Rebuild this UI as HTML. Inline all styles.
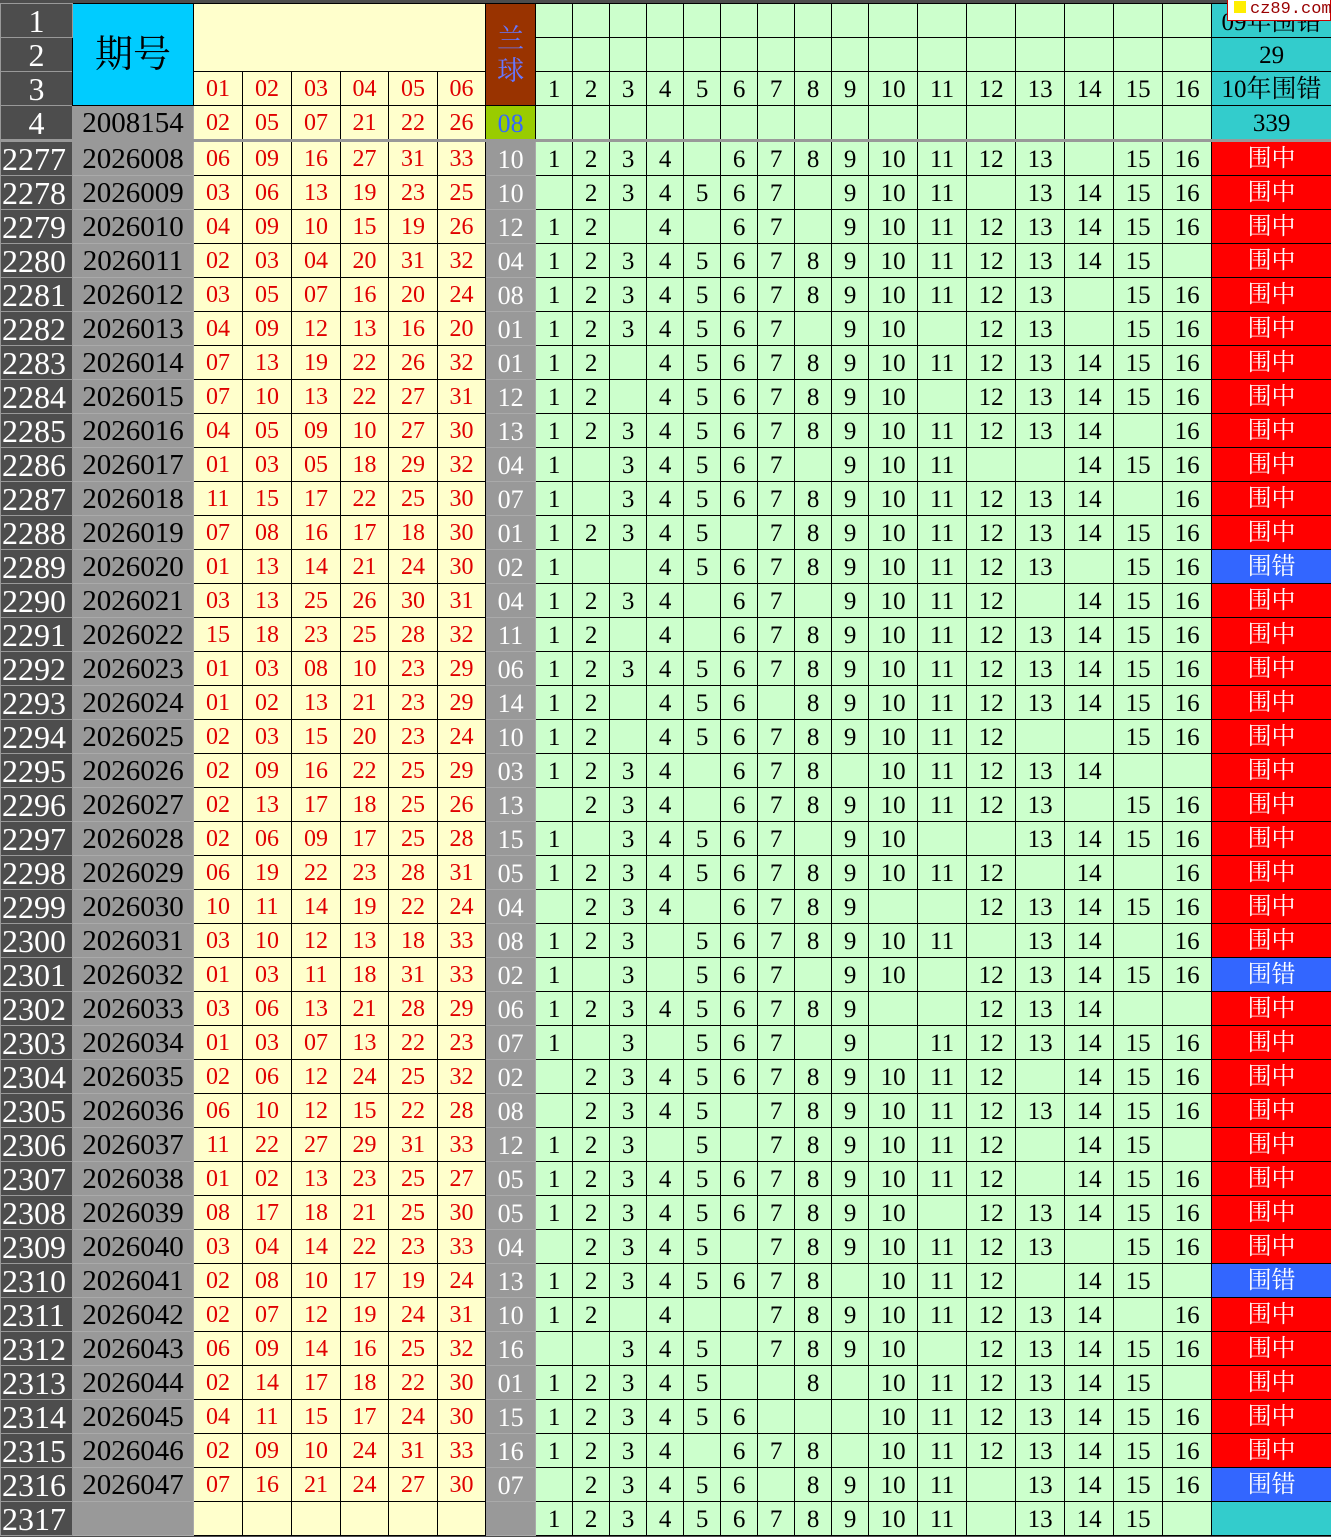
<!DOCTYPE html>
<html><head><meta charset="utf-8">
<style>
html,body{margin:0;padding:0;background:#4d4d4d;}
body{width:1331px;height:1537px;overflow:hidden;position:relative;}
table{position:absolute;left:0;top:3px;border-collapse:collapse;table-layout:fixed;width:1331px;font-family:"Liberation Serif","Noto Serif CJK SC",serif;}
td{border:1px solid #000;height:33px;padding:0;text-align:center;vertical-align:bottom;line-height:31px;font-size:25px;background:#ccffcc;color:#000;overflow:hidden;white-space:nowrap;}
td.rn{background:#4d4d4d;color:#fff;font-size:32px;border-color:#999;text-align:center;line-height:32px;}
td.pd{background:#999;border-color:#aaa;font-size:29px;}
td.rd{background:#ffffcc;color:#e00000;font-size:24px;}
td.z{background:#ff0000;color:#fff;font-size:24px;}
td.c{background:#3366ff;color:#fff;font-size:24px;}
td.cy{background:#33cccc;font-size:25px;}
tbody.d td:nth-child(1){background:#4d4d4d;color:#fff;font-size:32px;border-color:#999;text-align:left;padding-left:1px;line-height:32px;}
tbody.d td:nth-child(2){background:#999;border-color:#aaa;font-size:29px;}
tbody.d td:nth-child(n+3):nth-child(-n+8){background:#ffffcc;color:#e00000;font-size:24px;}
tbody.d td:nth-child(9){background:#999;color:#fff;font-size:26px;border-color:#aaa;}
tbody.d tr:first-child td{border-top:3px solid #999;}
.wm{position:absolute;left:1227px;top:0;width:102px;height:20px;background:#fff;border:1px solid #c00;border-top:0;font-family:"Liberation Mono",monospace;font-size:17px;color:#900;line-height:20px;white-space:nowrap;}
.wm i{display:inline-block;width:12px;height:12px;background:#ffee00;margin:0 4px 0 6px;}
</style></head><body>
<table>
<colgroup><col style="width:72px"><col style="width:121px"><col style="width:49px"><col style="width:49px"><col style="width:49px"><col style="width:48px"><col style="width:49px"><col style="width:48px"><col style="width:50px"><col style="width:37px"><col style="width:37px"><col style="width:37px"><col style="width:37px"><col style="width:37px"><col style="width:37px"><col style="width:37px"><col style="width:37px"><col style="width:37px"><col style="width:49px"><col style="width:49px"><col style="width:49px"><col style="width:49px"><col style="width:49px"><col style="width:49px"><col style="width:49px"><col style="width:120px"></colgroup>
<tbody>
<tr><td class="rn">1</td><td rowspan="3" style="background:#00ccff;font-size:38px;vertical-align:middle;line-height:40px">期号</td><td rowspan="2" colspan="6" class="rd"></td><td rowspan="3" style="background:#993300;color:#6677ff;font-size:27px;line-height:32px;vertical-align:middle">兰<br>球</td><td></td><td></td><td></td><td></td><td></td><td></td><td></td><td></td><td></td><td></td><td></td><td></td><td></td><td></td><td></td><td></td><td class="cy" style="line-height:28px">09年围错</td></tr>
<tr><td class="rn">2</td><td></td><td></td><td></td><td></td><td></td><td></td><td></td><td></td><td></td><td></td><td></td><td></td><td></td><td></td><td></td><td></td><td class="cy">29</td></tr>
<tr><td class="rn">3</td><td class="rd">01</td><td class="rd">02</td><td class="rd">03</td><td class="rd">04</td><td class="rd">05</td><td class="rd">06</td><td>1</td><td>2</td><td>3</td><td>4</td><td>5</td><td>6</td><td>7</td><td>8</td><td>9</td><td>10</td><td>11</td><td>12</td><td>13</td><td>14</td><td>15</td><td>16</td><td class="cy">10年围错</td></tr>
<tr><td class="rn">4</td><td class="pd">2008154</td><td class="rd">02</td><td class="rd">05</td><td class="rd">07</td><td class="rd">21</td><td class="rd">22</td><td class="rd">26</td><td style="background:#99cc00;color:#3366ff;font-size:26px">08</td><td></td><td></td><td></td><td></td><td></td><td></td><td></td><td></td><td></td><td></td><td></td><td></td><td></td><td></td><td></td><td></td><td class="cy">339</td></tr>
</tbody>
<tbody class="d">
<tr><td>2277</td><td>2026008</td><td>06</td><td>09</td><td>16</td><td>27</td><td>31</td><td>33</td><td>10</td><td>1</td><td>2</td><td>3</td><td>4</td><td></td><td>6</td><td>7</td><td>8</td><td>9</td><td>10</td><td>11</td><td>12</td><td>13</td><td></td><td>15</td><td>16</td><td class="z">围中</td></tr>
<tr><td>2278</td><td>2026009</td><td>03</td><td>06</td><td>13</td><td>19</td><td>23</td><td>25</td><td>10</td><td></td><td>2</td><td>3</td><td>4</td><td>5</td><td>6</td><td>7</td><td></td><td>9</td><td>10</td><td>11</td><td></td><td>13</td><td>14</td><td>15</td><td>16</td><td class="z">围中</td></tr>
<tr><td>2279</td><td>2026010</td><td>04</td><td>09</td><td>10</td><td>15</td><td>19</td><td>26</td><td>12</td><td>1</td><td>2</td><td></td><td>4</td><td></td><td>6</td><td>7</td><td></td><td>9</td><td>10</td><td>11</td><td>12</td><td>13</td><td>14</td><td>15</td><td>16</td><td class="z">围中</td></tr>
<tr><td>2280</td><td>2026011</td><td>02</td><td>03</td><td>04</td><td>20</td><td>31</td><td>32</td><td>04</td><td>1</td><td>2</td><td>3</td><td>4</td><td>5</td><td>6</td><td>7</td><td>8</td><td>9</td><td>10</td><td>11</td><td>12</td><td>13</td><td>14</td><td>15</td><td></td><td class="z">围中</td></tr>
<tr><td>2281</td><td>2026012</td><td>03</td><td>05</td><td>07</td><td>16</td><td>20</td><td>24</td><td>08</td><td>1</td><td>2</td><td>3</td><td>4</td><td>5</td><td>6</td><td>7</td><td>8</td><td>9</td><td>10</td><td>11</td><td>12</td><td>13</td><td></td><td>15</td><td>16</td><td class="z">围中</td></tr>
<tr><td>2282</td><td>2026013</td><td>04</td><td>09</td><td>12</td><td>13</td><td>16</td><td>20</td><td>01</td><td>1</td><td>2</td><td>3</td><td>4</td><td>5</td><td>6</td><td>7</td><td></td><td>9</td><td>10</td><td></td><td>12</td><td>13</td><td></td><td>15</td><td>16</td><td class="z">围中</td></tr>
<tr><td>2283</td><td>2026014</td><td>07</td><td>13</td><td>19</td><td>22</td><td>26</td><td>32</td><td>01</td><td>1</td><td>2</td><td></td><td>4</td><td>5</td><td>6</td><td>7</td><td>8</td><td>9</td><td>10</td><td>11</td><td>12</td><td>13</td><td>14</td><td>15</td><td>16</td><td class="z">围中</td></tr>
<tr><td>2284</td><td>2026015</td><td>07</td><td>10</td><td>13</td><td>22</td><td>27</td><td>31</td><td>12</td><td>1</td><td>2</td><td></td><td>4</td><td>5</td><td>6</td><td>7</td><td>8</td><td>9</td><td>10</td><td></td><td>12</td><td>13</td><td>14</td><td>15</td><td>16</td><td class="z">围中</td></tr>
<tr><td>2285</td><td>2026016</td><td>04</td><td>05</td><td>09</td><td>10</td><td>27</td><td>30</td><td>13</td><td>1</td><td>2</td><td>3</td><td>4</td><td>5</td><td>6</td><td>7</td><td>8</td><td>9</td><td>10</td><td>11</td><td>12</td><td>13</td><td>14</td><td></td><td>16</td><td class="z">围中</td></tr>
<tr><td>2286</td><td>2026017</td><td>01</td><td>03</td><td>05</td><td>18</td><td>29</td><td>32</td><td>04</td><td>1</td><td></td><td>3</td><td>4</td><td>5</td><td>6</td><td>7</td><td></td><td>9</td><td>10</td><td>11</td><td></td><td></td><td>14</td><td>15</td><td>16</td><td class="z">围中</td></tr>
<tr><td>2287</td><td>2026018</td><td>11</td><td>15</td><td>17</td><td>22</td><td>25</td><td>30</td><td>07</td><td>1</td><td></td><td>3</td><td>4</td><td>5</td><td>6</td><td>7</td><td>8</td><td>9</td><td>10</td><td>11</td><td>12</td><td>13</td><td>14</td><td></td><td>16</td><td class="z">围中</td></tr>
<tr><td>2288</td><td>2026019</td><td>07</td><td>08</td><td>16</td><td>17</td><td>18</td><td>30</td><td>01</td><td>1</td><td>2</td><td>3</td><td>4</td><td>5</td><td></td><td>7</td><td>8</td><td>9</td><td>10</td><td>11</td><td>12</td><td>13</td><td>14</td><td>15</td><td>16</td><td class="z">围中</td></tr>
<tr><td>2289</td><td>2026020</td><td>01</td><td>13</td><td>14</td><td>21</td><td>24</td><td>30</td><td>02</td><td>1</td><td></td><td></td><td>4</td><td>5</td><td>6</td><td>7</td><td>8</td><td>9</td><td>10</td><td>11</td><td>12</td><td>13</td><td></td><td>15</td><td>16</td><td class="c">围错</td></tr>
<tr><td>2290</td><td>2026021</td><td>03</td><td>13</td><td>25</td><td>26</td><td>30</td><td>31</td><td>04</td><td>1</td><td>2</td><td>3</td><td>4</td><td></td><td>6</td><td>7</td><td></td><td>9</td><td>10</td><td>11</td><td>12</td><td></td><td>14</td><td>15</td><td>16</td><td class="z">围中</td></tr>
<tr><td>2291</td><td>2026022</td><td>15</td><td>18</td><td>23</td><td>25</td><td>28</td><td>32</td><td>11</td><td>1</td><td>2</td><td></td><td>4</td><td></td><td>6</td><td>7</td><td>8</td><td>9</td><td>10</td><td>11</td><td>12</td><td>13</td><td>14</td><td>15</td><td>16</td><td class="z">围中</td></tr>
<tr><td>2292</td><td>2026023</td><td>01</td><td>03</td><td>08</td><td>10</td><td>23</td><td>29</td><td>06</td><td>1</td><td>2</td><td>3</td><td>4</td><td>5</td><td>6</td><td>7</td><td>8</td><td>9</td><td>10</td><td>11</td><td>12</td><td>13</td><td>14</td><td>15</td><td>16</td><td class="z">围中</td></tr>
<tr><td>2293</td><td>2026024</td><td>01</td><td>02</td><td>13</td><td>21</td><td>23</td><td>29</td><td>14</td><td>1</td><td>2</td><td></td><td>4</td><td>5</td><td>6</td><td></td><td>8</td><td>9</td><td>10</td><td>11</td><td>12</td><td>13</td><td>14</td><td>15</td><td>16</td><td class="z">围中</td></tr>
<tr><td>2294</td><td>2026025</td><td>02</td><td>03</td><td>15</td><td>20</td><td>23</td><td>24</td><td>10</td><td>1</td><td>2</td><td></td><td>4</td><td>5</td><td>6</td><td>7</td><td>8</td><td>9</td><td>10</td><td>11</td><td>12</td><td></td><td></td><td>15</td><td>16</td><td class="z">围中</td></tr>
<tr><td>2295</td><td>2026026</td><td>02</td><td>09</td><td>16</td><td>22</td><td>25</td><td>29</td><td>03</td><td>1</td><td>2</td><td>3</td><td>4</td><td></td><td>6</td><td>7</td><td>8</td><td></td><td>10</td><td>11</td><td>12</td><td>13</td><td>14</td><td></td><td></td><td class="z">围中</td></tr>
<tr><td>2296</td><td>2026027</td><td>02</td><td>13</td><td>17</td><td>18</td><td>25</td><td>26</td><td>13</td><td></td><td>2</td><td>3</td><td>4</td><td></td><td>6</td><td>7</td><td>8</td><td>9</td><td>10</td><td>11</td><td>12</td><td>13</td><td></td><td>15</td><td>16</td><td class="z">围中</td></tr>
<tr><td>2297</td><td>2026028</td><td>02</td><td>06</td><td>09</td><td>17</td><td>25</td><td>28</td><td>15</td><td>1</td><td></td><td>3</td><td>4</td><td>5</td><td>6</td><td>7</td><td></td><td>9</td><td>10</td><td></td><td></td><td>13</td><td>14</td><td>15</td><td>16</td><td class="z">围中</td></tr>
<tr><td>2298</td><td>2026029</td><td>06</td><td>19</td><td>22</td><td>23</td><td>28</td><td>31</td><td>05</td><td>1</td><td>2</td><td>3</td><td>4</td><td>5</td><td>6</td><td>7</td><td>8</td><td>9</td><td>10</td><td>11</td><td>12</td><td></td><td>14</td><td></td><td>16</td><td class="z">围中</td></tr>
<tr><td>2299</td><td>2026030</td><td>10</td><td>11</td><td>14</td><td>19</td><td>22</td><td>24</td><td>04</td><td></td><td>2</td><td>3</td><td>4</td><td></td><td>6</td><td>7</td><td>8</td><td>9</td><td></td><td></td><td>12</td><td>13</td><td>14</td><td>15</td><td>16</td><td class="z">围中</td></tr>
<tr><td>2300</td><td>2026031</td><td>03</td><td>10</td><td>12</td><td>13</td><td>18</td><td>33</td><td>08</td><td>1</td><td>2</td><td>3</td><td></td><td>5</td><td>6</td><td>7</td><td>8</td><td>9</td><td>10</td><td>11</td><td></td><td>13</td><td>14</td><td></td><td>16</td><td class="z">围中</td></tr>
<tr><td>2301</td><td>2026032</td><td>01</td><td>03</td><td>11</td><td>18</td><td>31</td><td>33</td><td>02</td><td>1</td><td></td><td>3</td><td></td><td>5</td><td>6</td><td>7</td><td></td><td>9</td><td>10</td><td></td><td>12</td><td>13</td><td>14</td><td>15</td><td>16</td><td class="c">围错</td></tr>
<tr><td>2302</td><td>2026033</td><td>03</td><td>06</td><td>13</td><td>21</td><td>28</td><td>29</td><td>06</td><td>1</td><td>2</td><td>3</td><td>4</td><td>5</td><td>6</td><td>7</td><td>8</td><td>9</td><td></td><td></td><td>12</td><td>13</td><td>14</td><td></td><td></td><td class="z">围中</td></tr>
<tr><td>2303</td><td>2026034</td><td>01</td><td>03</td><td>07</td><td>13</td><td>22</td><td>23</td><td>07</td><td>1</td><td></td><td>3</td><td></td><td>5</td><td>6</td><td>7</td><td></td><td>9</td><td></td><td>11</td><td>12</td><td>13</td><td>14</td><td>15</td><td>16</td><td class="z">围中</td></tr>
<tr><td>2304</td><td>2026035</td><td>02</td><td>06</td><td>12</td><td>24</td><td>25</td><td>32</td><td>02</td><td></td><td>2</td><td>3</td><td>4</td><td>5</td><td>6</td><td>7</td><td>8</td><td>9</td><td>10</td><td>11</td><td>12</td><td></td><td>14</td><td>15</td><td>16</td><td class="z">围中</td></tr>
<tr><td>2305</td><td>2026036</td><td>06</td><td>10</td><td>12</td><td>15</td><td>22</td><td>28</td><td>08</td><td></td><td>2</td><td>3</td><td>4</td><td>5</td><td></td><td>7</td><td>8</td><td>9</td><td>10</td><td>11</td><td>12</td><td>13</td><td>14</td><td>15</td><td>16</td><td class="z">围中</td></tr>
<tr><td>2306</td><td>2026037</td><td>11</td><td>22</td><td>27</td><td>29</td><td>31</td><td>33</td><td>12</td><td>1</td><td>2</td><td>3</td><td></td><td>5</td><td></td><td>7</td><td>8</td><td>9</td><td>10</td><td>11</td><td>12</td><td></td><td>14</td><td>15</td><td></td><td class="z">围中</td></tr>
<tr><td>2307</td><td>2026038</td><td>01</td><td>02</td><td>13</td><td>23</td><td>25</td><td>27</td><td>05</td><td>1</td><td>2</td><td>3</td><td>4</td><td>5</td><td>6</td><td>7</td><td>8</td><td>9</td><td>10</td><td>11</td><td>12</td><td></td><td>14</td><td>15</td><td>16</td><td class="z">围中</td></tr>
<tr><td>2308</td><td>2026039</td><td>08</td><td>17</td><td>18</td><td>21</td><td>25</td><td>30</td><td>05</td><td>1</td><td>2</td><td>3</td><td>4</td><td>5</td><td>6</td><td>7</td><td>8</td><td>9</td><td>10</td><td></td><td>12</td><td>13</td><td>14</td><td>15</td><td>16</td><td class="z">围中</td></tr>
<tr><td>2309</td><td>2026040</td><td>03</td><td>04</td><td>14</td><td>22</td><td>23</td><td>33</td><td>04</td><td></td><td>2</td><td>3</td><td>4</td><td>5</td><td></td><td>7</td><td>8</td><td>9</td><td>10</td><td>11</td><td>12</td><td>13</td><td></td><td>15</td><td>16</td><td class="z">围中</td></tr>
<tr><td>2310</td><td>2026041</td><td>02</td><td>08</td><td>10</td><td>17</td><td>19</td><td>24</td><td>13</td><td>1</td><td>2</td><td>3</td><td>4</td><td>5</td><td>6</td><td>7</td><td>8</td><td></td><td>10</td><td>11</td><td>12</td><td></td><td>14</td><td>15</td><td></td><td class="c">围错</td></tr>
<tr><td>2311</td><td>2026042</td><td>02</td><td>07</td><td>12</td><td>19</td><td>24</td><td>31</td><td>10</td><td>1</td><td>2</td><td></td><td>4</td><td></td><td></td><td>7</td><td>8</td><td>9</td><td>10</td><td>11</td><td>12</td><td>13</td><td>14</td><td></td><td>16</td><td class="z">围中</td></tr>
<tr><td>2312</td><td>2026043</td><td>06</td><td>09</td><td>14</td><td>16</td><td>25</td><td>32</td><td>16</td><td></td><td></td><td>3</td><td>4</td><td>5</td><td></td><td>7</td><td>8</td><td>9</td><td>10</td><td></td><td>12</td><td>13</td><td>14</td><td>15</td><td>16</td><td class="z">围中</td></tr>
<tr><td>2313</td><td>2026044</td><td>02</td><td>14</td><td>17</td><td>18</td><td>22</td><td>30</td><td>01</td><td>1</td><td>2</td><td>3</td><td>4</td><td>5</td><td></td><td></td><td>8</td><td></td><td>10</td><td>11</td><td>12</td><td>13</td><td>14</td><td>15</td><td></td><td class="z">围中</td></tr>
<tr><td>2314</td><td>2026045</td><td>04</td><td>11</td><td>15</td><td>17</td><td>24</td><td>30</td><td>15</td><td>1</td><td>2</td><td>3</td><td>4</td><td>5</td><td>6</td><td></td><td></td><td></td><td>10</td><td>11</td><td>12</td><td>13</td><td>14</td><td>15</td><td>16</td><td class="z">围中</td></tr>
<tr><td>2315</td><td>2026046</td><td>02</td><td>09</td><td>10</td><td>24</td><td>31</td><td>33</td><td>16</td><td>1</td><td>2</td><td>3</td><td>4</td><td></td><td>6</td><td>7</td><td>8</td><td></td><td>10</td><td>11</td><td>12</td><td>13</td><td>14</td><td>15</td><td>16</td><td class="z">围中</td></tr>
<tr><td>2316</td><td>2026047</td><td>07</td><td>16</td><td>21</td><td>24</td><td>27</td><td>30</td><td>07</td><td></td><td>2</td><td>3</td><td>4</td><td>5</td><td>6</td><td></td><td>8</td><td>9</td><td>10</td><td>11</td><td></td><td>13</td><td>14</td><td>15</td><td>16</td><td class="c">围错</td></tr>
<tr><td>2317</td><td></td><td></td><td></td><td></td><td></td><td></td><td></td><td></td><td>1</td><td>2</td><td>3</td><td>4</td><td>5</td><td>6</td><td>7</td><td>8</td><td>9</td><td>10</td><td>11</td><td></td><td>13</td><td>14</td><td>15</td><td></td><td class="cy"></td></tr>
</tbody>
</table>
<div class="wm"><i></i>cz89.com</div>
</body></html>
